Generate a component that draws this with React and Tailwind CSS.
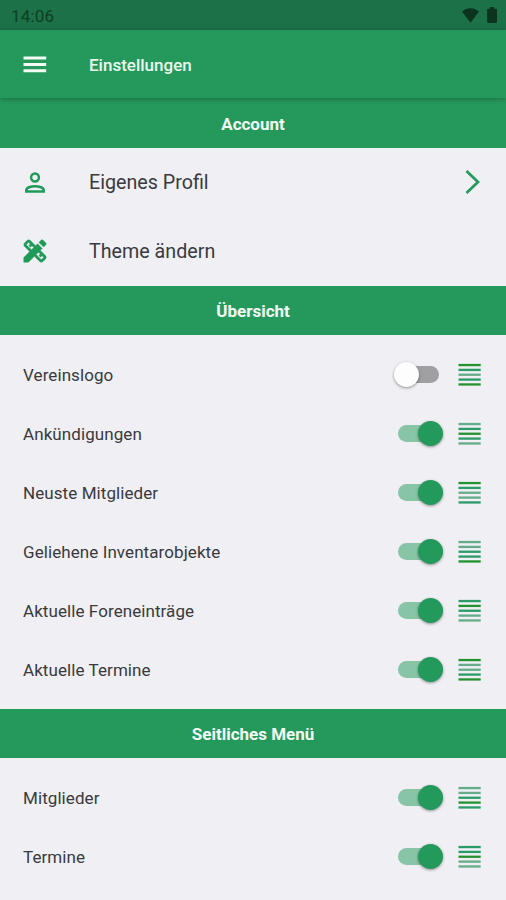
import React, { useState } from 'react';

const G = '#24922f';
const M = '#2b9b68';
const L = '#65ac88';

const overviewItems = [
  { label: 'Vereinslogo', active: false, tones: [G, M, L, M, G] },
  { label: 'Ankündigungen', active: true, tones: [L, M, G, M, L] },
  { label: 'Neuste Mitglieder', active: true, tones: [G, M, L, L, M] },
  { label: 'Geliehene Inventarobjekte', active: true, tones: [L, L, M, M, G] },
  { label: 'Aktuelle Foreneinträge', active: true, tones: [M, G, M, L, L] },
  { label: 'Aktuelle Termine', active: true, tones: [G, L, L, M, G] },
];

const menuItems = [
  { label: 'Mitglieder', active: true, tones: [L, L, M, G, M] },
  { label: 'Termine', active: true, tones: [M, M, G, L, L] },
];

function StatusBar() {
  return (
    <div className="flex h-[30px] items-center justify-between bg-[#1c7148] pl-[11px] pr-[9px]">
      <span className="text-[17px] leading-none tracking-[0.2px] text-[#0d3f25] pt-[3px]">14:06</span>
      <div className="flex items-center gap-[8px]">
        <svg width="17" height="15" viewBox="0 0 17 15" fill="#0b331d">
          <path d="M0 3.6C2.3 1.4 5.3.2 8.5.2s6.2 1.2 8.5 3.4L8.5 14.8z" />
        </svg>
        <svg width="10" height="16" viewBox="0 0 10 16" fill="#0b331d">
          <path d="M3 0h4v1.700h1.800c.7 0 1.200.5 1.200 1.200v11.900c0 .7-.5 1.200-1.200 1.200H1.200C.5 16 0 15.500 0 14.800V2.900c0-.7.500-1.200 1.200-1.200H3z" />
        </svg>
      </div>
    </div>
  );
}

function MenuIcon() {
  return (
    <svg width="30" height="30" viewBox="0 0 30 30" fill="#f2fbf4">
      <path d="M3.500 7.600h22.700v3H3.500zM3.500 13.900h22.700v3H3.500zM3.500 20.200h22.700v3H3.500z" />
    </svg>
  );
}

function PersonIcon() {
  return (
    <svg width="30" height="30" viewBox="0 0 30 30" fill="none" stroke="#1f9a58" strokeWidth="2.5">
      <circle cx="15" cy="10.500" r="3.900" />
      <path d="M6.300 24.500V23.200C6.300 20.600 11 19.200 15 19.200S23.700 20.600 23.700 23.200V24.500Z" />
    </svg>
  );
}

// ruler outlined, pencil filled
function DesignIcon() {
  return (
    <svg width="30" height="30" viewBox="0 0 24 24" fill="#1f9a58" stroke="#1f9a58" strokeWidth="0.3">
      <path d="M16.24 11.51l1.57-1.57-3.75-3.75-1.57 1.57-4.14-4.13c-.78-.78-2.05-.78-2.83 0l-1.9 1.900c-.78.78-.78 2.050 0 2.830l4.130 4.130L3 17.250V21h3.750l4.760-4.760 4.130 4.130c.95.95 2.230.6 2.830 0l1.900-1.900c.78-.78.78-2.050 0-2.830l-4.130-4.130zm-7.060-.44L5.040 6.940l1.890-1.900 1.270 1.270-1.190 1.190 1.410 1.410 1.190-1.190 1.450 1.450-1.880 1.900zm7.880 7.890l-4.130-4.130 1.900-1.900 1.450 1.450-1.190 1.190 1.410 1.410 1.190-1.190 1.270 1.270-1.900 1.900zM20.710 7.040c.39-.39.39-1.020 0-1.410l-2.340-2.340c-.47-.47-1.120-.29-1.410 0l-1.830 1.830 3.750 3.750 1.830-1.830z" />
    </svg>
  );
}

function SectionHeader({ title, className = '' }) {
  return (
    <h2 className={`flex items-center justify-center bg-[#25985c] pt-[2px] text-[17px] font-bold leading-none text-[#f2fbf4] ${className}`}>
      {title}
    </h2>
  );
}

function Switch({ checked, onChange }) {
  return (
    <button
      type="button"
      role="switch"
      aria-checked={checked}
      onClick={onChange}
      className={`flex h-[17px] w-[41px] items-center rounded-full ${checked ? 'justify-end bg-[#88c5a6]' : 'bg-[#a09fa1]'}`}
    >
      <span
        className={`h-[25px] w-[25px] shrink-0 rounded-full shadow-[0_1px_3px_rgba(0,0,0,0.4)] ${
          checked ? '-mr-1 bg-[#23995c]' : '-ml-1 bg-[#fdfdfd]'
        }`}
      />
    </button>
  );
}

function DragHandle({ tones }) {
  return (
    <svg width="23" height="24" viewBox="0 0 23 24">
      {tones.map((tone, i) => (
        <rect key={i} x="0.5" y={0.9 + i * 4.85} width="22.2" height="2.3" fill={tone} />
      ))}
    </svg>
  );
}

function ToggleList({ initialItems }) {
  const [items, setItems] = useState(initialItems);

  const toggle = (label) => {
    setItems(items.map(i => (i.label === label ? { ...i, active: !i.active } : i)));
  };

  return (
    <ul className="py-[10px]">
      {items.map(item => (
        <li key={item.label} className="flex h-[59px] items-center pl-[23px] pr-[25px]">
          <span className="flex-1 pt-[2px] text-[17px] leading-none tracking-[0.08px] text-[#3a3a3d]">{item.label}</span>
          <Switch checked={item.active} onChange={() => toggle(item.label)} />
          <div className="ml-[19px]"><DragHandle tones={item.tones} /></div>
        </li>
      ))}
    </ul>
  );
}

export default function App() {
  return (
    <div className="h-[900px] w-full overflow-hidden bg-[#efeff4] font-['Roboto',sans-serif]">
      <StatusBar />

      <header className="relative flex h-[68px] items-center bg-[#25985c] pl-5 shadow-[0_1px_5px_rgba(0,0,0,0.28)]">
        <MenuIcon />
        <h1 className="ml-[39px] pt-[2px] text-[17px] font-medium leading-none text-[#eaf8ee]">Einstellungen</h1>
      </header>

      <SectionHeader title="Account" className="h-[50px]" />
      <ul>
        <li className="flex h-[69px] items-center pb-px pl-5 pr-[25px]">
          <PersonIcon />
          <span className="ml-[39px] flex-1 pt-[2px] text-[19.7px] leading-none text-[#3a3a3d]">Eigenes Profil</span>
          <svg width="16" height="24" viewBox="0 0 16 24" fill="none" stroke="#23995c" strokeWidth="2.7">
            <path d="M1.500 1L13 12L1.500 23" />
          </svg>
        </li>
        <li className="flex h-[69px] items-center pb-px pl-5">
          <DesignIcon />
          <span className="ml-[39px] pt-[2px] text-[19.7px] leading-none text-[#3a3a3d]">Theme ändern</span>
        </li>
      </ul>

      <SectionHeader title="Übersicht" className="h-[49px]" />
      <ToggleList initialItems={overviewItems} />

      <SectionHeader title="Seitliches Menü" className="h-[49px]" />
      <ToggleList initialItems={menuItems} />
    </div>
  );
}
